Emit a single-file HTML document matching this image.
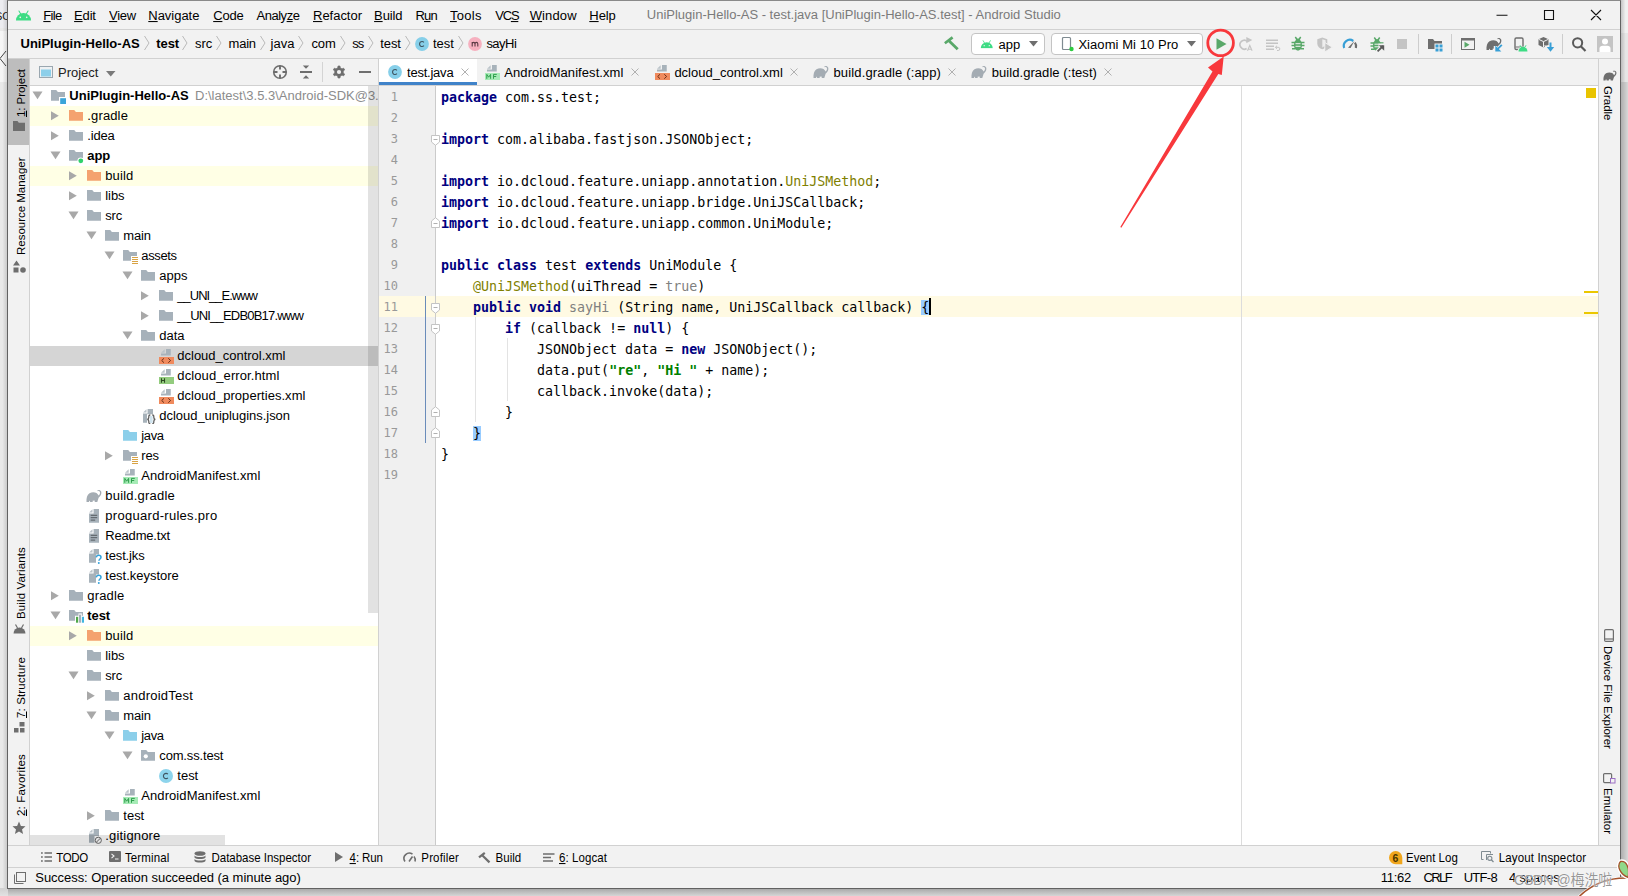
<!DOCTYPE html>
<html lang="en"><head><meta charset="utf-8"><title>UniPlugin-Hello-AS - test.java - Android Studio</title>
<style>
html,body{margin:0;padding:0}
body{width:1628px;height:896px;overflow:hidden;position:relative;background:#dadada;font-family:"Liberation Sans","Noto Sans CJK SC",sans-serif;font-size:13px;color:#000;line-height:1}
.a{position:absolute}
svg{overflow:visible}
.t{position:absolute;white-space:pre;line-height:16px;height:16px;transform:scaleY(1.04);transform-origin:0 12px}
.hl{position:absolute;height:1px;background:#d1d1d1}
.vl{position:absolute;width:1px;background:#d1d1d1}
u{text-decoration:underline;text-underline-offset:0.5px;text-decoration-thickness:1px}
.row{position:absolute;left:0;width:348px;height:20px}
.code{position:absolute;left:62px;font-family:"DejaVu Sans Mono","Liberation Mono",monospace;font-size:13.3px;white-space:pre;height:21px;line-height:21px;color:#000}
.ln{position:absolute;left:0;width:19px;text-align:right;font-family:"DejaVu Sans Mono","Liberation Mono",monospace;font-size:12px;height:21px;line-height:21px;color:#999}
.k{color:#000080;font-weight:bold}
.an{color:#808000}
.s{color:#008000;font-weight:bold}
.g{color:#808080}
.br{background:#99ccff}
.vt{position:absolute;white-space:pre;font-size:11.5px;line-height:14px;height:14px;transform-origin:0 0}
.bt{position:absolute;white-space:pre;font-size:11.5px;line-height:18px;top:849px;transform:scaleY(1.04);transform-origin:0 13px}
</style></head>
<body>
<svg width="0" height="0" style="position:absolute"><defs>
<symbol id="android" viewBox="0 0 18 12"><path d="M1 11.5a8 8.2 0 0 1 16 0z" fill="#3ddc84"/><path d="M4.2 1l1.7 3M13.8 1l-1.7 3" stroke="#3ddc84" stroke-width="1.1" stroke-linecap="round"/><circle cx="5.6" cy="8" r="0.9" fill="#f2f2f2"/><circle cx="12.4" cy="8" r="0.9" fill="#f2f2f2"/></symbol>
<symbol id="fold" viewBox="0 0 16 16"><path d="M1 2h5.200l1.700 1.900H15v8.900H1z" fill="currentColor"/></symbol>
<symbol id="file" viewBox="0 0 16 16"><path d="M7 1h6v14H3V5z" fill="#a6b1ba" opacity=".7"/><path d="M6 1v4H2z" fill="#a6b1ba"/></symbol>
<symbol id="fhalf" viewBox="0 0 16 16"><path d="M7 1h6v7H3V5z" fill="#a6b1ba" opacity=".7"/><path d="M6 1v4H2z" fill="#a6b1ba"/></symbol>
<symbol id="cls" viewBox="0 0 14 14"><circle cx="7" cy="7" r="6.900" fill="#86cfe9"/><path d="M8.900 8.700a2.500 2.500 0 1 1 0-3.400" fill="none" stroke="#3f5561" stroke-width="1.150"/></symbol>
<symbol id="mth" viewBox="0 0 14 14"><circle cx="7" cy="7" r="6.900" fill="#f6b0bf"/><path d="M4.200 9.400V5.100M4.200 6.600c.5-1.600 2.500-1.700 2.800.2V9.400M7 6.600c.5-1.600 2.600-1.700 2.800.2V9.400" fill="none" stroke="#5b3a44" stroke-width="1.100"/></symbol>
<symbol id="eleph" viewBox="0 0 16 16"><path d="M0.500 14C0.300 10 1 7 3.500 5.200C5.500 4 8.500 3.800 10.500 5C11.500 5.600 12.200 6.600 12.600 7.600C13.800 6.600 14.300 5.200 13.900 4C13.600 3.200 12.800 2.900 11.800 3.300L11.200 2.500C12.600 1.600 14.500 1.900 15.200 3.600C15.900 5.600 14.800 8 12.600 9.800C12.200 11.400 11.600 12.800 11.300 14H8.800L8.600 12.600C8 12.800 7.400 12.800 6.800 12.600L6.600 14H4.200L3.600 12.400C3.200 12.900 3 13.400 2.900 14Z" fill="currentColor"/></symbol>
<symbol id="xclose" viewBox="0 0 8 8"><path d="M0.5 0.5l7 7M7.500 0.500l-7 7" stroke="#b0b0b0" stroke-width="1" fill="none"/></symbol>
<symbol id="hammer" viewBox="0 0 16 16"><path d="M1 5.200L5.200 1l3.300 3.300-1.400 1.400 7.900 7.900-1.900 1.900-7.900-7.900-1.400 1.400z" fill="#59a869"/></symbol>
<symbol id="chev" viewBox="0 0 6 16"><path d="M0.500 1L5 8L0.500 15" fill="none" stroke="#b9b9b9" stroke-width="1"/></symbol>
<symbol id="aro" viewBox="0 0 11 11"><path d="M0.500 0.400h10L5.500 8.200z" fill="#a8a8a8"/></symbol>
<symbol id="arc" viewBox="0 0 11 12"><path d="M1 1.300v9L8.800 5.800z" fill="#a8a8a8"/></symbol>
<symbol id="gear" viewBox="0 0 14 14"><path d="M5.84 2.86L6.00 1.08L8.00 1.08L8.16 2.86L10.01 3.93L11.62 3.18L12.62 4.91L11.16 5.93L11.16 8.07L12.62 9.09L11.62 10.82L10.01 10.07L8.16 11.14L8.00 12.92L6.00 12.92L5.84 11.14L3.99 10.07L2.38 10.82L1.38 9.09L2.84 8.07L2.84 5.93L1.38 4.91L2.38 3.18L3.99 3.93z" fill="#6e6e6e" stroke="#6e6e6e" stroke-width="0.8" stroke-linejoin="round"/><circle cx="7" cy="7" r="2.100" fill="#f2f2f2"/></symbol>
<symbol id="projfold" viewBox="0 0 16 16"><path d="M1 2h5.200l1.700 1.900H15v8.900H1z" fill="#a6b1ba"/><rect x="9" y="9" width="7.800" height="7.800" fill="#fff"/><rect x="10.200" y="10.200" width="6.200" height="6.200" fill="#3aa5d9"/></symbol>
<symbol id="modfold" viewBox="0 0 16 16"><path d="M1 2h5.200l1.700 1.900H15v8.900H1z" fill="#a6b1ba"/><circle cx="12.800" cy="12.800" r="3.400" fill="#fff"/><circle cx="12.800" cy="12.800" r="2.400" fill="#2fd16b"/></symbol>
<symbol id="resfold" viewBox="0 0 16 16"><path d="M1 2h5.200l1.700 1.900H15v8.900H1z" fill="#a6b1ba"/><rect x="9" y="8" width="8" height="9" fill="#fff"/><path d="M10 9.500h6M10 11.500h6M10 13.500h6M10 15.500h6" stroke="#d9a343" stroke-width="1"/></symbol>
<symbol id="testmod" viewBox="0 0 16 16"><path d="M1 2h5.200l1.700 1.900H15v8.900H1z" fill="#a6b1ba"/><path d="M7 7.800h3.500V5.600h3.300v2.200H17V15.600H7z" fill="#fff"/><rect x="8" y="8.800" width="2.200" height="5.900" fill="#4fa84a"/><rect x="11" y="6.600" width="2.100" height="8.100" fill="#a6b1ba"/><rect x="13.900" y="8.800" width="2.100" height="5.900" fill="#40b6e0"/></symbol>
<symbol id="pkg" viewBox="0 0 16 16"><path d="M1 2h5.200l1.700 1.900H15v8.900H1z" fill="#a6b1ba"/><circle cx="5.800" cy="8.300" r="2.100" fill="#fff"/></symbol>
<symbol id="xml" viewBox="0 0 16 16"><path d="M8 1H12.750V7.500H3V5.600H8z" fill="#a7b2ba"/><path d="M3 4.700H6.700V1.300z" fill="#bac3c9"/><rect x="1" y="9" width="15" height="7" fill="#f08a5d"/><path d="M6 10.300L3.700 12.500L6 14.700M10.300 10.300L12.600 12.500L10.300 14.700" fill="none" stroke="#6b3018" stroke-width="1"/></symbol>
<symbol id="htm" viewBox="0 0 16 16"><path d="M8 1H12.750V7.500H3V5.600H8z" fill="#a7b2ba"/><path d="M3 4.700H6.700V1.300z" fill="#bac3c9"/><rect x="1" y="9" width="15" height="7" fill="#93cc7e"/><path d="M3.500 10.200v4.600M6.500 10.200v4.600M3.500 12.500h3" fill="none" stroke="#2c4a22" stroke-width="1.100"/></symbol>
<symbol id="mf" viewBox="0 0 16 16"><path d="M8 1H12.750V7.500H3V5.600H8z" fill="#a7b2ba"/><path d="M3 4.700H6.700V1.300z" fill="#bac3c9"/><rect x="1" y="9" width="15" height="7" fill="#a6ebb6"/><path d="M2.800 14.800V10.400l1.900 2.800 1.900-2.800v4.400M9.500 14.800V10.400h3.300M9.500 12.500h2.700" fill="none" stroke="#2f9e4c" stroke-width="1"/></symbol>
<symbol id="json" viewBox="0 0 16 16"><path d="M7.600 1H13V6.300H7V14.800H3V5.500H7.600z" fill="#a7b2ba"/><path d="M3 4.500H6.500V1.300z" fill="#bac3c9"/><path d="M10 8h2.600v7H10z" fill="#cfe3ee"/><path d="M10.300 7c-1.600 0-1.500 1-1.500 2.200 0 1.200-.3 1.900-1.500 2.100 1.200.2 1.500.9 1.500 2.100 0 1.200-.1 2.200 1.500 2.200M12.300 7c1.600 0 1.500 1 1.500 2.200 0 1.200.3 1.900 1.500 2.100-1.200.2-1.500.9-1.500 2.100 0 1.200.1 2.200-1.500 2.200" fill="none" stroke="#5e5e5e" stroke-width="1.300"/></symbol>
<symbol id="txt" viewBox="0 0 16 16"><path d="M7.600 1H13V14.800H3V5.500H7.600z" fill="#a7b2ba"/><path d="M3 4.500H6.500V1.300z" fill="#bac3c9"/><path d="M4.700 7.300h6.500M4.700 9.700h6.500M4.700 12.100h4.500" stroke="#555b60" stroke-width="1"/></symbol>
<symbol id="unk" viewBox="0 0 16 16"><path d="M7.600 1H13V6.500H10V14.800H3V5.500H7.600z" fill="#a7b2ba"/><path d="M3 4.500H6.500V1.300z" fill="#bac3c9"/><path d="M10.300 9.300c.2-1.400 1.300-2 2.400-2 1.300 0 2.300.8 2.300 2 0 1.700-2.100 1.700-2.100 3.500" fill="none" stroke="#35a3dc" stroke-width="1.500"/><circle cx="12.800" cy="15" r=".95" fill="#35a3dc"/></symbol>
<symbol id="gitig" viewBox="0 0 16 16"><path d="M7.600 1H13V8H8.500V14.800H3V5.500H7.600z" fill="#a7b2ba"/><path d="M3 4.500H6.500V1.300z" fill="#bac3c9"/><circle cx="12.300" cy="12.300" r="3.100" fill="none" stroke="#6e6e6e" stroke-width="1"/><path d="M10.200 14.400l4.200-4.200" stroke="#6e6e6e" stroke-width="1"/></symbol>
<symbol id="cls16" viewBox="0 0 16 16"><circle cx="8" cy="8" r="7" fill="#8dd4ec"/><path d="M9.900 9.800a2.600 2.600 0 1 1 0-3.600" fill="none" stroke="#3f5561" stroke-width="1.150"/></symbol>
<symbol id="bug" viewBox="0 0 16 16"><path d="M5.300 1L7 3.500M10.700 1L9 3.500M1.500 6.500h3.500M1.500 9.500h3.500M2 12.700h3.500M11 6.500h3.500M11 9.500h3.500M10.500 12.700h3.500" fill="none" stroke="#59a869" stroke-width="1.500"/><path d="M8 2.600c1.500 0 2.300 1 2.400 2 1 .7 1.600 2.400 1.600 4.400 0 3-1.600 5.500-4 5.500S4 12 4 9c0-2 .6-3.700 1.600-4.400.1-1 .9-2 2.400-2z" fill="#59a869"/><path d="M5.500 7.700h5M5.500 10.300h5" stroke="#f2f2f2" stroke-width="1"/></symbol>
</defs></svg>
<div class="a" style="left:0;top:0;width:8px;height:896px;background:#e9e9e9"></div>
<div class="a" style="left:0;top:0;width:8px;height:28px;background:#ececf0"></div>
<div class="a" style="left:0;top:31px;width:8px;height:51px;background:#f6f6f6"></div>
<div class="a" style="left:0;top:0;width:8px;height:896px;background:linear-gradient(to right,rgba(0,0,0,0) 30%,rgba(0,0,0,.16))"></div>
<div class="t" style="left:-5px;top:8px;font-size:11px;color:#222">SC</div>
<svg class="a" style="left:0;top:50px" width="7" height="18"><path d="M6 1L0 8.500L6 16" fill="none" stroke="#444" stroke-width="1"/></svg>
<div class="a" style="left:0;top:888px;width:1628px;height:8px;background:linear-gradient(to bottom,#a4a4a4,#d6d6d6)"></div>
<div class="a" style="left:0;top:888px;width:8px;height:8px;background:linear-gradient(to bottom,#d0d0d0,#e2e2e2)"></div>
<div class="a" style="left:1620px;top:0;width:8px;height:33px;background:#f0f0f0"></div>
<div class="a" style="left:1620px;top:33px;width:8px;height:49px;background:#e6e6e6"></div>
<div class="a" style="left:1620px;top:82px;width:8px;height:814px;background:linear-gradient(to right,#a8a8a8,#d8d8d8)"></div>
<div class="a" style="left:1620px;top:0;width:8px;height:82px;background:linear-gradient(to right,rgba(0,0,0,.22),rgba(0,0,0,0) 70%)"></div>
<div class="a" id="win" style="left:7px;top:0;width:1612px;height:887px;background:#f2f2f2;border:1px solid #626262;border-top-color:#8a8a8a"></div>
<div class="hl" style="left:8px;top:29px;width:1612px"></div>
<div class="hl" style="left:8px;top:58px;width:1612px"></div>
<div class="hl" style="left:30px;top:85px;width:1568px"></div>
<div class="vl" style="left:29px;top:59px;height:787px"></div>
<div class="vl" style="left:378px;top:59px;height:787px"></div>
<div class="vl" style="left:1598px;top:59px;height:787px"></div>
<div class="hl" style="left:8px;top:845px;width:1612px"></div>
<div class="hl" style="left:8px;top:867px;width:1612px"></div>
<svg class="a" style="left:14.500px;top:9.500px" width="17" height="11" viewBox="0 0 18 12" preserveAspectRatio="none"><use href="#android"/></svg>
<div class="t" style="left:43.3px;top:8px;letter-spacing:-0.642px;"><u>F</u>ile</div>
<div class="t" style="left:74.1px;top:8px;letter-spacing:-0.177px;"><u>E</u>dit</div>
<div class="t" style="left:109.1px;top:8px;letter-spacing:-0.313px;"><u>V</u>iew</div>
<div class="t" style="left:148.3px;top:8px;letter-spacing:-0.027px;"><u>N</u>avigate</div>
<div class="t" style="left:213.2px;top:8px;letter-spacing:-0.173px;"><u>C</u>ode</div>
<div class="t" style="left:256.5px;top:8px;letter-spacing:-0.481px;">Analy<u>z</u>e</div>
<div class="t" style="left:313px;top:8px;letter-spacing:-0.018px;"><u>R</u>efactor</div>
<div class="t" style="left:374.1px;top:8px;letter-spacing:-0.144px;"><u>B</u>uild</div>
<div class="t" style="left:415.5px;top:8px;letter-spacing:-0.853px;">R<u>u</u>n</div>
<div class="t" style="left:450px;top:8px;letter-spacing:0.268px;"><u>T</u>ools</div>
<div class="t" style="left:495.3px;top:8px;letter-spacing:-1.245px;">VC<u>S</u></div>
<div class="t" style="left:529.7px;top:8px;letter-spacing:0.125px;"><u>W</u>indow</div>
<div class="t" style="left:589.3px;top:8px;letter-spacing:-0.062px;"><u>H</u>elp</div>
<div class="t" style="left:646.800px;top:7px;color:#7a7a7a;letter-spacing:-0.000px;">UniPlugin-Hello-AS - test.java [UniPlugin-Hello-AS.test] - Android Studio</div>
<svg class="a" style="left:1490px;top:5px" width="120" height="20" viewBox="0 0 120 20"><path d="M6.500 10.300h11M54.500 5.500h9v9h-9zM101 5l10 10M111 5l-10 10" fill="none" stroke="#111" stroke-width="1.100"/></svg>
<div class="t" style="left:20.5px;top:36px;font-weight:bold;letter-spacing:0.002px;">UniPlugin-Hello-AS</div>
<div class="t" style="left:156.3px;top:36px;font-weight:bold;letter-spacing:-0.106px;">test</div>
<div class="t" style="left:195px;top:36px;letter-spacing:-0.048px;">src</div>
<div class="t" style="left:228.6px;top:36px;letter-spacing:-0.247px;">main</div>
<div class="t" style="left:270.6px;top:36px;letter-spacing:0.010px;">java</div>
<div class="t" style="left:311.4px;top:36px;letter-spacing:-0.087px;">com</div>
<div class="t" style="left:352.2px;top:36px;letter-spacing:-0.950px;">ss</div>
<div class="t" style="left:380.2px;top:36px;letter-spacing:-0.067px;">test</div>
<div class="t" style="left:433px;top:36px;letter-spacing:0.008px;">test</div>
<div class="t" style="left:486.4px;top:36px;letter-spacing:-0.523px;">sayHi</div>
<svg class="a" style="left:144px;top:35px" width="6" height="16"><use href="#chev"/></svg><svg class="a" style="left:182.4px;top:35px" width="6" height="16"><use href="#chev"/></svg><svg class="a" style="left:215.8px;top:35px" width="6" height="16"><use href="#chev"/></svg><svg class="a" style="left:259.7px;top:35px" width="6" height="16"><use href="#chev"/></svg><svg class="a" style="left:298.4px;top:35px" width="6" height="16"><use href="#chev"/></svg><svg class="a" style="left:339.6px;top:35px" width="6" height="16"><use href="#chev"/></svg><svg class="a" style="left:367.5px;top:35px" width="6" height="16"><use href="#chev"/></svg><svg class="a" style="left:404.6px;top:35px" width="6" height="16"><use href="#chev"/></svg><svg class="a" style="left:457.6px;top:35px" width="6" height="16"><use href="#chev"/></svg>
<svg class="a" style="left:415px;top:36.7px" width="14" height="14"><use href="#cls"/></svg><svg class="a" style="left:468px;top:36.7px" width="14" height="14"><use href="#mth"/></svg>
<svg class="a" style="left:940px;top:30px" width="24" height="24"><path d="M4.850 13.270L12.600 7.370" stroke="#59a869" stroke-width="2.700" fill="none"/><path d="M8.900 10.700L17.700 19.300" stroke="#59a869" stroke-width="2.800" fill="none"/></svg>
<div class="a" style="left:971px;top:33px;width:71.500px;height:19.600px;background:#fff;border:1px solid #c4c4c4;border-radius:4px"></div>
<svg class="a" style="left:979.500px;top:39.700px" width="13.500" height="8.600" viewBox="0 0 18 12" preserveAspectRatio="none"><use href="#android"/></svg>
<div class="t" style="left:998.500px;top:37px;letter-spacing:0.066px;">app</div>
<svg class="a" style="left:1029px;top:41px" width="9" height="6"><path d="M0 0h9L4.500 5.500z" fill="#6e6e6e"/></svg>
<div class="a" style="left:1051px;top:33px;width:149.500px;height:19.600px;background:#fff;border:1px solid #c4c4c4;border-radius:4px"></div>
<svg class="a" style="left:1061px;top:37px" width="14" height="15"><rect x="1.500" y="0.500" width="8" height="12" rx="1" fill="#fff" stroke="#7f8b91" stroke-width="1.200"/><circle cx="10.500" cy="12" r="2.200" fill="#2ecc40"/></svg>
<div class="t" style="left:1078.400px;top:37px;letter-spacing:0.063px;">Xiaomi Mi 10 Pro</div>
<svg class="a" style="left:1187px;top:41px" width="9" height="6"><path d="M0 0h9L4.500 5.500z" fill="#6e6e6e"/></svg>
<svg class="a" style="left:1216px;top:38px" width="11" height="12"><path d="M0.500 0.300L10.500 6L0.500 11.700z" fill="#59a869"/></svg>
<svg class="a" style="left:1238px;top:36px" width="16" height="16"><path d="M9.300 5.400A4.400 4.400 0 1 0 8.600 12.500" fill="none" stroke="#c4c4c4" stroke-width="1.700"/><path d="M8.300 1L14.300 4L8.300 7.300z" fill="#c4c4c4"/><path d="M9.500 14.800L11.800 9.500L14.100 14.800M10.300 13.200h3" fill="none" stroke="#c4c4c4" stroke-width="1.100"/></svg>
<svg class="a" style="left:1265px;top:36px" width="16" height="16"><path d="M1 4.200h12M1 7.200h12M1 10.200h8M1 13.200h8" stroke="#c4c4c4" stroke-width="1.600"/><path d="M10.800 11.300h2.400a1.600 1.600 0 0 1 0 3.200h-1.200M12 9.800l-1.700 1.500 1.700 1.500" fill="none" stroke="#c4c4c4" stroke-width="1"/></svg>
<svg class="a" style="left:1290px;top:36px" width="16" height="16"><use href="#bug"/></svg>
<svg class="a" style="left:1316px;top:36px" width="17" height="17"><path d="M1.300 3.200L6.300 1.500L11.300 3.200V7.500C11.300 10.500 9 12.300 6.300 13.300C3.600 12.300 1.300 10.500 1.300 7.500Z" fill="#c4c4c4"/><path d="M6.300 3.300V11.500C8 10.700 9.600 9.400 9.600 7.300V4.300z" fill="#eee"/><path d="M8.800 6.500L16.300 11.200L8.800 16z" fill="#c4c4c4" stroke="#f2f2f2" stroke-width="1"/></svg>
<svg class="a" style="left:1342px;top:36px" width="16" height="16"><path d="M2.200 12A6 6 0 0 1 11.300 5" fill="none" stroke="#389fd6" stroke-width="2.200"/><path d="M12.900 6.600A6 6 0 0 1 13.900 12" fill="none" stroke="#6e6e6e" stroke-width="2.200"/><path d="M6 11.800L12.600 4.800L8.600 12z" fill="#6e6e6e"/></svg>
<svg class="a" style="left:1369px;top:36px" width="16" height="17"><use href="#bug"/><path d="M7.500 16.500L13 11M9.500 9.500H15.500V15.500" fill="none" stroke="#f2f2f2" stroke-width="4"/><path d="M8.600 15.400L14 10" fill="none" stroke="#5a5a5a" stroke-width="1.800"/><path d="M9.800 9.300H15.200V14.700z" fill="#5a5a5a"/></svg>
<svg class="a" style="left:1397px;top:39px" width="10" height="10"><rect width="10" height="10" fill="#c4c4c4"/></svg>
<div class="vl" style="left:1418px;top:34px;height:20px;background:#cdcdcd"></div>
<svg class="a" style="left:1427px;top:36px" width="16" height="16"><path d="M1 3h5l1.500 2H15v8H1z" fill="#6e6e6e"/><rect x="7.500" y="7.500" width="9" height="9" fill="#f2f2f2"/><path d="M8.500 8.500h3v3h-3zM12.500 8.500h3v3h-3zM8.500 12.500h3v3h-3zM12.500 12.500h3v3h-3z" fill="#389fd6"/></svg>
<div class="vl" style="left:1451px;top:34px;height:20px;background:#cdcdcd"></div>
<svg class="a" style="left:1460px;top:36px" width="16" height="16"><path d="M1 2h14v12H1z" fill="#6e6e6e"/><path d="M2 4.500h12v8.500H2z" fill="#f2f2f2"/><path d="M4.500 5.800L9.500 8.800L4.500 11.800z" fill="#59a869"/></svg>
<svg class="a" style="left:1486px;top:36px;color:#6e6e6e" width="16" height="16"><use href="#eleph"/><path d="M8 8h9v9H8z" fill="#f2f2f2" opacity="0"/><path d="M15.500 9.200L10.800 13.900M9.500 10v5.500H15" fill="none" stroke="#f2f2f2" stroke-width="3.500"/><path d="M15.800 8.800L11 13.600" fill="none" stroke="#389fd6" stroke-width="1.900"/><path d="M9.300 9.500V15.500H15.300z" fill="#389fd6"/></svg>
<svg class="a" style="left:1513px;top:36px" width="16" height="16"><rect x="2" y="2" width="8" height="11.500" rx="1.200" fill="#f2f2f2" stroke="#6e6e6e" stroke-width="1.400"/><path d="M2.500 11h7" stroke="#6e6e6e" stroke-width="1"/><path d="M5 16.500a5 5 0 0 1 10 0" fill="#f2f2f2" stroke="#f2f2f2" stroke-width="2"/><path d="M5.500 15.500a4.500 4.700 0 0 1 9 0z" fill="#3ddc84"/><path d="M7 9.300l1.200 2M13 9.300l-1.200 2" stroke="#3ddc84" stroke-width="1"/></svg>
<svg class="a" style="left:1538px;top:36px" width="17" height="17"><path d="M5.500 1L10.500 3.200V9L5.500 11.500L0.500 9V3.200z" fill="#6e6e6e"/><path d="M0.800 3.400L5.500 5.600L10.200 3.400M5.500 5.600V11.300" fill="none" stroke="#f2f2f2" stroke-width="1"/><path d="M12.500 5v9M8 10.500h9l-4.500 6z" stroke="#f2f2f2" stroke-width="2" fill="#f2f2f2"/><path d="M12.500 6.500v6" stroke="#389fd6" stroke-width="2"/><path d="M8.800 11h7.400l-3.700 4.800z" fill="#389fd6"/></svg>
<div class="vl" style="left:1562px;top:34px;height:20px;background:#cdcdcd"></div>
<svg class="a" style="left:1571px;top:36px" width="16" height="16"><circle cx="6.600" cy="6.800" r="4.600" fill="none" stroke="#5a5a5a" stroke-width="2"/><path d="M9.800 10.200L14.500 15" stroke="#5a5a5a" stroke-width="2.200"/></svg>
<svg class="a" style="left:1597px;top:36px" width="16" height="16"><rect width="16" height="16" fill="#c4c4c4"/><circle cx="8" cy="5.600" r="3" fill="#fff"/><path d="M2.500 16v-3.500c0-2 1.500-2.800 3-2.800h5c1.500 0 3 .8 3 2.800V16z" fill="#fff"/></svg>
<svg class="a" style="left:39px;top:66px" width="15" height="13"><rect x="0.500" y="0.500" width="13" height="11" fill="#eef1f3" stroke="#9aa7b0"/><rect x="2" y="3.500" width="10" height="7" fill="#8ccfea"/></svg>
<div class="t" style="left:58px;top:65px;color:#222">Project</div>
<svg class="a" style="left:106px;top:71px" width="10" height="6"><path d="M0 0h9.500L4.750 5.500z" fill="#7a7a7a"/></svg>
<svg class="a" style="left:272px;top:64px" width="16" height="16"><circle cx="8" cy="8" r="6.300" fill="none" stroke="#6e6e6e" stroke-width="1.600"/><path d="M8 1.500v4M8 10.500v4M1.500 8h4M10.500 8h4" stroke="#6e6e6e" stroke-width="1.900"/></svg>
<svg class="a" style="left:299px;top:64px" width="14" height="16"><path d="M1 8h12" stroke="#6e6e6e" stroke-width="2"/><path d="M3.800 1.600h6.400L7 4.800zM3.800 14.400h6.400L7 11.200z" fill="#6e6e6e"/></svg>
<div class="vl" style="left:322px;top:62px;height:20px;background:#d4d4d4"></div>
<svg class="a" style="left:332px;top:65px" width="14" height="14"><use href="#gear"/></svg>
<svg class="a" style="left:359px;top:71px" width="12" height="2"><rect width="12" height="2" fill="#6e6e6e"/></svg>
<div class="a" id="tree" style="left:30px;top:86px;width:348px;height:759px;background:#fff;overflow:hidden">
<div class="row" style="top:0px;"><svg class="a" style="left:2px;top:5px" width="11" height="11"><use href="#aro"/></svg><svg class="a" style="left:20px;top:2px" width="16" height="16"><use href="#projfold"/></svg><span class="t" style="left:39.3px;top:2px;font-weight:bold;letter-spacing:0.015px;">UniPlugin-Hello-AS</span><span class="t" style="left:165px;top:2px;color:#8c8c8c;font-size:13px">D:\latest\3.5.3\Android-SDK@3.</span></div>
<div class="row" style="top:20px;background:#ffffe5;"><svg class="a" style="left:20px;top:4px" width="11" height="12"><use href="#arc"/></svg><svg class="a" style="left:38px;top:2px;color:#f4a26f" width="16" height="16"><use href="#fold"/></svg><span class="t" style="left:57.3px;top:2px;letter-spacing:0.136px;">.gradle</span></div>
<div class="row" style="top:40px;"><svg class="a" style="left:20px;top:4px" width="11" height="12"><use href="#arc"/></svg><svg class="a" style="left:38px;top:2px;color:#a6b1ba" width="16" height="16"><use href="#fold"/></svg><span class="t" style="left:57.3px;top:2px;letter-spacing:-0.201px;">.idea</span></div>
<div class="row" style="top:60px;"><svg class="a" style="left:20px;top:5px" width="11" height="11"><use href="#aro"/></svg><svg class="a" style="left:38px;top:2px" width="16" height="16"><use href="#modfold"/></svg><span class="t" style="left:57.3px;top:2px;font-weight:bold;letter-spacing:-0.142px;">app</span></div>
<div class="row" style="top:80px;background:#ffffe5;"><svg class="a" style="left:38px;top:4px" width="11" height="12"><use href="#arc"/></svg><svg class="a" style="left:56px;top:2px;color:#f4a26f" width="16" height="16"><use href="#fold"/></svg><span class="t" style="left:75.3px;top:2px;letter-spacing:0.096px;">build</span></div>
<div class="row" style="top:100px;"><svg class="a" style="left:38px;top:4px" width="11" height="12"><use href="#arc"/></svg><svg class="a" style="left:56px;top:2px;color:#a6b1ba" width="16" height="16"><use href="#fold"/></svg><span class="t" style="left:75.3px;top:2px;letter-spacing:-0.079px;">libs</span></div>
<div class="row" style="top:120px;"><svg class="a" style="left:38px;top:5px" width="11" height="11"><use href="#aro"/></svg><svg class="a" style="left:56px;top:2px;color:#a6b1ba" width="16" height="16"><use href="#fold"/></svg><span class="t" style="left:75.3px;top:2px;letter-spacing:-0.215px;">src</span></div>
<div class="row" style="top:140px;"><svg class="a" style="left:56px;top:5px" width="11" height="11"><use href="#aro"/></svg><svg class="a" style="left:74px;top:2px;color:#a6b1ba" width="16" height="16"><use href="#fold"/></svg><span class="t" style="left:93.3px;top:2px;letter-spacing:-0.184px;">main</span></div>
<div class="row" style="top:160px;"><svg class="a" style="left:74px;top:5px" width="11" height="11"><use href="#aro"/></svg><svg class="a" style="left:92px;top:2px" width="16" height="16"><use href="#resfold"/></svg><span class="t" style="left:111.3px;top:2px;letter-spacing:-0.355px;">assets</span></div>
<div class="row" style="top:180px;"><svg class="a" style="left:92px;top:5px" width="11" height="11"><use href="#aro"/></svg><svg class="a" style="left:110px;top:2px;color:#a6b1ba" width="16" height="16"><use href="#fold"/></svg><span class="t" style="left:129.3px;top:2px;letter-spacing:-0.001px;">apps</span></div>
<div class="row" style="top:200px;"><svg class="a" style="left:110px;top:4px" width="11" height="12"><use href="#arc"/></svg><svg class="a" style="left:128px;top:2px;color:#a6b1ba" width="16" height="16"><use href="#fold"/></svg><span class="t" style="left:147.3px;top:2px;letter-spacing:-1.005px;">__UNI__E.www</span></div>
<div class="row" style="top:220px;"><svg class="a" style="left:110px;top:4px" width="11" height="12"><use href="#arc"/></svg><svg class="a" style="left:128px;top:2px;color:#a6b1ba" width="16" height="16"><use href="#fold"/></svg><span class="t" style="left:147.3px;top:2px;letter-spacing:-0.805px;">__UNI__EDB0B17.www</span></div>
<div class="row" style="top:240px;"><svg class="a" style="left:92px;top:5px" width="11" height="11"><use href="#aro"/></svg><svg class="a" style="left:110px;top:2px;color:#a6b1ba" width="16" height="16"><use href="#fold"/></svg><span class="t" style="left:129.3px;top:2px;letter-spacing:-0.028px;">data</span></div>
<div class="row" style="top:260px;background:#d5d5d5;"><svg class="a" style="left:128px;top:2px" width="16" height="16"><use href="#xml"/></svg><span class="t" style="left:147.3px;top:2px;letter-spacing:-0.011px;">dcloud_control.xml</span></div>
<div class="row" style="top:280px;"><svg class="a" style="left:128px;top:2px" width="16" height="16"><use href="#htm"/></svg><span class="t" style="left:147.3px;top:2px;letter-spacing:0.103px;">dcloud_error.html</span></div>
<div class="row" style="top:300px;"><svg class="a" style="left:128px;top:2px" width="16" height="16"><use href="#xml"/></svg><span class="t" style="left:147.3px;top:2px;letter-spacing:0.048px;">dcloud_properties.xml</span></div>
<div class="row" style="top:320px;"><svg class="a" style="left:110px;top:2px" width="16" height="16"><use href="#json"/></svg><span class="t" style="left:129.3px;top:2px;letter-spacing:-0.038px;">dcloud_uniplugins.json</span></div>
<div class="row" style="top:340px;"><svg class="a" style="left:92px;top:2px;color:#8ccfea" width="16" height="16"><use href="#fold"/></svg><span class="t" style="left:111.3px;top:2px;letter-spacing:-0.352px;">java</span></div>
<div class="row" style="top:360px;"><svg class="a" style="left:74px;top:4px" width="11" height="12"><use href="#arc"/></svg><svg class="a" style="left:92px;top:2px" width="16" height="16"><use href="#resfold"/></svg><span class="t" style="left:111.3px;top:2px;letter-spacing:-0.204px;">res</span></div>
<div class="row" style="top:380px;"><svg class="a" style="left:92px;top:2px" width="16" height="16"><use href="#mf"/></svg><span class="t" style="left:111.3px;top:2px;letter-spacing:0.075px;">AndroidManifest.xml</span></div>
<div class="row" style="top:400px;"><svg class="a" style="left:56px;top:2px;color:#a4acb3" width="16" height="16"><use href="#eleph"/></svg><span class="t" style="left:75.3px;top:2px;letter-spacing:0.207px;">build.gradle</span></div>
<div class="row" style="top:420px;"><svg class="a" style="left:56px;top:2px" width="16" height="16"><use href="#txt"/></svg><span class="t" style="left:75.3px;top:2px;letter-spacing:0.291px;">proguard-rules.pro</span></div>
<div class="row" style="top:440px;"><svg class="a" style="left:56px;top:2px" width="16" height="16"><use href="#txt"/></svg><span class="t" style="left:75.3px;top:2px;letter-spacing:-0.178px;">Readme.txt</span></div>
<div class="row" style="top:460px;"><svg class="a" style="left:56px;top:2px" width="16" height="16"><use href="#unk"/></svg><span class="t" style="left:75.3px;top:2px;letter-spacing:-0.159px;">test.jks</span></div>
<div class="row" style="top:480px;"><svg class="a" style="left:56px;top:2px" width="16" height="16"><use href="#unk"/></svg><span class="t" style="left:75.3px;top:2px;letter-spacing:-0.019px;">test.keystore</span></div>
<div class="row" style="top:500px;"><svg class="a" style="left:20px;top:4px" width="11" height="12"><use href="#arc"/></svg><svg class="a" style="left:38px;top:2px;color:#a6b1ba" width="16" height="16"><use href="#fold"/></svg><span class="t" style="left:57.3px;top:2px;letter-spacing:0.177px;">gradle</span></div>
<div class="row" style="top:520px;"><svg class="a" style="left:20px;top:5px" width="11" height="11"><use href="#aro"/></svg><svg class="a" style="left:38px;top:2px" width="16" height="16"><use href="#testmod"/></svg><span class="t" style="left:57.3px;top:2px;font-weight:bold;letter-spacing:-0.106px;">test</span></div>
<div class="row" style="top:540px;background:#ffffe5;"><svg class="a" style="left:38px;top:4px" width="11" height="12"><use href="#arc"/></svg><svg class="a" style="left:56px;top:2px;color:#f4a26f" width="16" height="16"><use href="#fold"/></svg><span class="t" style="left:75.3px;top:2px;letter-spacing:0.096px;">build</span></div>
<div class="row" style="top:560px;"><svg class="a" style="left:56px;top:2px;color:#a6b1ba" width="16" height="16"><use href="#fold"/></svg><span class="t" style="left:75.3px;top:2px;letter-spacing:-0.079px;">libs</span></div>
<div class="row" style="top:580px;"><svg class="a" style="left:38px;top:5px" width="11" height="11"><use href="#aro"/></svg><svg class="a" style="left:56px;top:2px;color:#a6b1ba" width="16" height="16"><use href="#fold"/></svg><span class="t" style="left:75.3px;top:2px;letter-spacing:-0.215px;">src</span></div>
<div class="row" style="top:600px;"><svg class="a" style="left:56px;top:4px" width="11" height="12"><use href="#arc"/></svg><svg class="a" style="left:74px;top:2px;color:#a6b1ba" width="16" height="16"><use href="#fold"/></svg><span class="t" style="left:93.3px;top:2px;letter-spacing:0.226px;">androidTest</span></div>
<div class="row" style="top:620px;"><svg class="a" style="left:56px;top:5px" width="11" height="11"><use href="#aro"/></svg><svg class="a" style="left:74px;top:2px;color:#a6b1ba" width="16" height="16"><use href="#fold"/></svg><span class="t" style="left:93.3px;top:2px;letter-spacing:-0.184px;">main</span></div>
<div class="row" style="top:640px;"><svg class="a" style="left:74px;top:5px" width="11" height="11"><use href="#aro"/></svg><svg class="a" style="left:92px;top:2px;color:#8ccfea" width="16" height="16"><use href="#fold"/></svg><span class="t" style="left:111.3px;top:2px;letter-spacing:-0.352px;">java</span></div>
<div class="row" style="top:660px;"><svg class="a" style="left:92px;top:5px" width="11" height="11"><use href="#aro"/></svg><svg class="a" style="left:110px;top:2px" width="16" height="16"><use href="#pkg"/></svg><span class="t" style="left:129.3px;top:2px;letter-spacing:-0.164px;">com.ss.test</span></div>
<div class="row" style="top:680px;"><svg class="a" style="left:128px;top:2px" width="16" height="16"><use href="#cls16"/></svg><span class="t" style="left:147.3px;top:2px;letter-spacing:-0.005px;">test</span></div>
<div class="row" style="top:700px;"><svg class="a" style="left:92px;top:2px" width="16" height="16"><use href="#mf"/></svg><span class="t" style="left:111.3px;top:2px;letter-spacing:0.075px;">AndroidManifest.xml</span></div>
<div class="row" style="top:720px;"><svg class="a" style="left:56px;top:4px" width="11" height="12"><use href="#arc"/></svg><svg class="a" style="left:74px;top:2px;color:#a6b1ba" width="16" height="16"><use href="#fold"/></svg><span class="t" style="left:93.3px;top:2px;letter-spacing:-0.005px;">test</span></div>
<div class="row" style="top:740px;"><svg class="a" style="left:56px;top:2px" width="16" height="16"><use href="#gitig"/></svg><span class="t" style="left:75.3px;top:2px;letter-spacing:0.172px;">.gitignore</span></div>
<div class="a" style="left:338px;top:0;width:10px;height:527px;background:rgba(0,0,0,.115)"></div>
<div class="a" style="left:0;top:749px;width:195px;height:10px;background:rgba(0,0,0,.115)"></div>
</div>
<div class="a" style="left:379px;top:59px;width:98px;height:26px;background:#fff"></div>
<div class="a" style="left:379px;top:82px;width:98px;height:3px;background:#4083c9"></div>
<svg class="a" style="left:388px;top:65px" width="14" height="14"><use href="#cls"/></svg>
<div class="t" style="left:407px;top:65px;letter-spacing:-0.225px;">test.java</div>
<svg class="a" style="left:461px;top:68px" width="8" height="8"><use href="#xclose"/></svg>
<svg class="a" style="left:484px;top:64px" width="16" height="16"><use href="#mf"/></svg>
<div class="t" style="left:504.3px;top:65px;letter-spacing:0.075px;">AndroidManifest.xml</div>
<svg class="a" style="left:631px;top:68px" width="8" height="8"><use href="#xclose"/></svg>
<svg class="a" style="left:654px;top:64px" width="16" height="16"><use href="#xml"/></svg>
<div class="t" style="left:674.4px;top:65px;letter-spacing:0.001px;">dcloud_control.xml</div>
<svg class="a" style="left:790px;top:68px" width="8" height="8"><use href="#xclose"/></svg>
<svg class="a" style="left:813px;top:64px;color:#a4acb3" width="16" height="16"><use href="#eleph"/></svg>
<div class="t" style="left:833.5px;top:65px;letter-spacing:0.142px;">build.gradle (:app)</div>
<svg class="a" style="left:948px;top:68px" width="8" height="8"><use href="#xclose"/></svg>
<svg class="a" style="left:971px;top:64px;color:#a4acb3" width="16" height="16"><use href="#eleph"/></svg>
<div class="t" style="left:991.7px;top:65px;letter-spacing:0.062px;">build.gradle (:test)</div>
<svg class="a" style="left:1104px;top:68px" width="8" height="8"><use href="#xclose"/></svg>
<div class="a" id="editor" style="left:379px;top:86px;width:1219px;height:759px;background:#fff;overflow:hidden">
<div class="a" style="left:0;top:0;width:56px;height:759px;background:#f0f0f0"></div>
<div class="a" style="left:0;top:210px;width:1219px;height:21px;background:#fffae3"></div>
<div class="vl" style="left:56px;top:0;height:759px;background:#cbcbcb"></div>
<div class="vl" style="left:862px;top:0;height:759px;background:#dcdcdc"></div>
<div class="ln" style="top:1px">1</div><div class="code" style="top:1px"><span class="k">package</span> com.ss.test;</div>
<div class="ln" style="top:22px">2</div><div class="code" style="top:22px"></div>
<div class="ln" style="top:43px">3</div><div class="code" style="top:43px"><span class="k">import</span> com.alibaba.fastjson.JSONObject;</div>
<div class="ln" style="top:64px">4</div><div class="code" style="top:64px"></div>
<div class="ln" style="top:85px">5</div><div class="code" style="top:85px"><span class="k">import</span> io.dcloud.feature.uniapp.annotation.<span class="an">UniJSMethod</span>;</div>
<div class="ln" style="top:106px">6</div><div class="code" style="top:106px"><span class="k">import</span> io.dcloud.feature.uniapp.bridge.UniJSCallback;</div>
<div class="ln" style="top:127px">7</div><div class="code" style="top:127px"><span class="k">import</span> io.dcloud.feature.uniapp.common.UniModule;</div>
<div class="ln" style="top:148px">8</div><div class="code" style="top:148px"></div>
<div class="ln" style="top:169px">9</div><div class="code" style="top:169px"><span class="k">public class</span> test <span class="k">extends</span> UniModule {</div>
<div class="ln" style="top:190px">10</div><div class="code" style="top:190px">    <span class="an">@UniJSMethod</span>(uiThread = <span class="g">true</span>)</div>
<div class="ln" style="top:211px">11</div><div class="code" style="top:211px">    <span class="k">public void</span> <span class="g">sayHi</span> (String name, UniJSCallback callback) <span class="br">{</span></div>
<div class="ln" style="top:232px">12</div><div class="code" style="top:232px">        <span class="k">if</span> (callback != <span class="k">null</span>) {</div>
<div class="ln" style="top:253px">13</div><div class="code" style="top:253px">            JSONObject data = <span class="k">new</span> JSONObject();</div>
<div class="ln" style="top:274px">14</div><div class="code" style="top:274px">            data.put(<span class="s">"re"</span>, <span class="s">"Hi "</span> + name);</div>
<div class="ln" style="top:295px">15</div><div class="code" style="top:295px">            callback.invoke(data);</div>
<div class="ln" style="top:316px">16</div><div class="code" style="top:316px">        }</div>
<div class="ln" style="top:337px">17</div><div class="code" style="top:337px">    <span class="br">}</span></div>
<div class="ln" style="top:358px">18</div><div class="code" style="top:358px">}</div>
<div class="ln" style="top:379px">19</div><div class="code" style="top:379px"></div>
<div class="a" style="left:46px;top:210px;width:1px;height:147px;background:#6a8cba"></div>
<div class="a" style="left:96px;top:231px;width:1px;height:105px;background:#e3e3e3"></div>
<div class="a" style="left:128px;top:252px;width:1px;height:63px;background:#e3e3e3"></div>
<svg class="a" style="left:52px;top:48.5px" width="9" height="11"><path d="M0.500 0.500h8v6.500L4.500 10.300L0.500 7z" fill="#fff" stroke="#c4c4c4"/><path d="M2.500 4.500h4" stroke="#b0b0b0"/></svg>
<svg class="a" style="left:52px;top:130.5px" width="9" height="11"><path d="M0.500 10.500h8V4L4.500 0.700L0.500 4z" fill="#fff" stroke="#c4c4c4"/><path d="M2.500 6.500h4" stroke="#b0b0b0"/></svg>
<svg class="a" style="left:52px;top:216.5px" width="9" height="11"><path d="M0.500 0.500h8v6.500L4.500 10.300L0.500 7z" fill="#fff" stroke="#c4c4c4"/><path d="M2.500 4.500h4" stroke="#b0b0b0"/></svg>
<svg class="a" style="left:52px;top:237.5px" width="9" height="11"><path d="M0.500 0.500h8v6.500L4.500 10.300L0.500 7z" fill="#fff" stroke="#c4c4c4"/><path d="M2.500 4.500h4" stroke="#b0b0b0"/></svg>
<svg class="a" style="left:52px;top:319.5px" width="9" height="11"><path d="M0.500 10.500h8V4L4.500 0.700L0.500 4z" fill="#fff" stroke="#c4c4c4"/><path d="M2.500 6.500h4" stroke="#b0b0b0"/></svg>
<svg class="a" style="left:52px;top:340.5px" width="9" height="11"><path d="M0.500 10.500h8V4L4.500 0.700L0.500 4z" fill="#fff" stroke="#c4c4c4"/><path d="M2.500 6.500h4" stroke="#b0b0b0"/></svg>
<div class="a" style="left:550px;top:212px;width:2px;height:17px;background:#000"></div>
<div class="a" style="left:1207px;top:2px;width:10px;height:10px;background:#e9c400"></div>
<div class="a" style="left:1205px;top:205px;width:14px;height:2px;background:#ebc700"></div>
<div class="a" style="left:1205px;top:226px;width:14px;height:2px;background:#ebc700"></div>
</div>
<div class="a" style="left:8px;top:59px;width:21px;height:86px;background:#bdbdbd"></div>
<div class="vt" style="left:14px;top:116.5px;transform:rotate(-90deg);letter-spacing:-0.059px;"><u>1</u>: Project</div>
<svg class="a" style="left:13px;top:120px" width="12" height="12"><path d="M0 1h4.500l1.300 1.800H12V11H0z" fill="#6e6e6e"/></svg>
<div class="vt" style="left:14px;top:254.5px;transform:rotate(-90deg);letter-spacing:-0.020px;">Resource Manager</div>
<svg class="a" style="left:13px;top:260px" width="13" height="13"><path d="M3.500 0.500L7 5.500H0zM0.500 7.500h5v5h-5z" fill="#6e6e6e"/><circle cx="10" cy="10" r="2.800" fill="#6e6e6e"/></svg>
<div class="vt" style="left:14px;top:618.6px;transform:rotate(-90deg);letter-spacing:0.135px;">Build Variants</div>
<svg class="a" style="left:13px;top:624px" width="13" height="10"><path d="M0.500 9.500a6 6 0 0 1 12 0z" fill="#6e6e6e"/><path d="M2.500 0.500l2 3.500M10.500 0.500l-2 3.500" stroke="#6e6e6e" stroke-width="1.200"/></svg>
<div class="vt" style="left:14px;top:718px;transform:rotate(-90deg);letter-spacing:0.128px;"><u>7</u>: Structure</div>
<svg class="a" style="left:14px;top:722px" width="11" height="11"><path d="M5.500 0h5v4.500h-5zM0 6h4.500v4.500H0zM6 6h4.500v4.500H6z" fill="#6e6e6e"/></svg>
<div class="vt" style="left:14px;top:816px;transform:rotate(-90deg);letter-spacing:0.159px;"><u>2</u>: Favorites</div>
<svg class="a" style="left:12px;top:821px" width="14" height="14"><path d="M7 0.500l1.900 4.400 4.600.4-3.500 3.100 1.100 4.700L7 10.600 2.900 13.100 4 8.400 0.500 5.300l4.600-.4z" fill="#6e6e6e"/></svg>
<svg class="a" style="left:1602.600px;top:68.800px;color:#6e6e6e" width="14" height="13" viewBox="0 0 16 16" preserveAspectRatio="none"><use href="#eleph"/></svg>
<div class="vt" style="left:1615px;top:86px;transform:rotate(90deg)">Gradle</div>
<svg class="a" style="left:1604px;top:629px" width="10" height="13"><rect x="0.600" y="0.600" width="8.800" height="11.800" rx="1.200" fill="none" stroke="#6e6e6e" stroke-width="1.200"/><path d="M1 10h8" stroke="#6e6e6e" stroke-width="1.200"/></svg>
<div class="vt" style="left:1615px;top:646px;transform:rotate(90deg)">Device File Explorer</div>
<svg class="a" style="left:1603px;top:772px" width="13" height="12"><rect x="0.600" y="1.600" width="8" height="9" rx="1" fill="none" stroke="#6e6e6e" stroke-width="1.200"/><rect x="7.500" y="6.500" width="4.500" height="4.500" fill="#f2f2f2" stroke="#9b6fc4" stroke-width="1"/></svg>
<div class="vt" style="left:1615px;top:788px;transform:rotate(90deg)">Emulator</div>
<svg class="a" style="left:41px;top:852px" width="11" height="10"><path d="M0 1h1.800M0 5h1.800M0 9h1.800M3.500 1H11M3.500 5H11M3.500 9H11" stroke="#6e6e6e" stroke-width="1.500"/></svg>
<div class="bt" style="left:56.3px;letter-spacing:-0.404px;">TODO</div>
<svg class="a" style="left:109px;top:851px" width="12" height="11"><rect width="12" height="11" rx="1" fill="#6e6e6e"/><path d="M2.500 2.800l2.500 2.200-2.500 2.200M6 8h3.500" fill="none" stroke="#f2f2f2" stroke-width="1.100"/></svg>
<div class="bt" style="left:124.9px;letter-spacing:0.141px;">Terminal</div>
<svg class="a" style="left:194px;top:851px" width="12" height="13"><ellipse cx="6" cy="2.500" rx="5.500" ry="2.300" fill="#6e6e6e"/><path d="M0.500 4.500c1.500 2 9.500 2 11 0v2c-1.500 2-9.500 2-11 0zM0.500 8c1.500 2 9.500 2 11 0v2c-1.500 2-9.500 2-11 0z" fill="#6e6e6e"/></svg>
<div class="bt" style="left:211.5px;letter-spacing:-0.013px;">Database Inspector</div>
<svg class="a" style="left:335px;top:852px" width="8" height="10"><path d="M0 0l8 5-8 5z" fill="#6e6e6e"/></svg>
<div class="bt" style="left:349.6px;letter-spacing:-0.118px;"><u>4</u>: Run</div>
<svg class="a" style="left:403px;top:852px" width="14" height="10"><path d="M2 9.500a5.300 5.300 0 0 1 7.500-7.300" fill="none" stroke="#6e6e6e" stroke-width="1.600"/><path d="M11 4.500a5.300 5.300 0 0 1 1 5" fill="none" stroke="#6e6e6e" stroke-width="1.600"/><path d="M6 9.500l3.500-5" stroke="#6e6e6e" stroke-width="1.600"/></svg>
<div class="bt" style="left:421.3px;letter-spacing:0.158px;">Profiler</div>
<svg class="a" style="left:476px;top:849px" width="16" height="16"><path d="M3 8.300L8.800 3.900" stroke="#6e6e6e" stroke-width="2.200" fill="none"/><path d="M6.200 6.300L13.500 13.400" stroke="#6e6e6e" stroke-width="2.200" fill="none"/></svg>
<div class="bt" style="left:495.5px;letter-spacing:0.044px;">Build</div>
<svg class="a" style="left:543px;top:853px" width="10" height="9"><path d="M0 1h11.500M0 4.500h8M0 8h10" stroke="#6e6e6e" stroke-width="1.500"/></svg>
<div class="bt" style="left:559px;letter-spacing:0.075px;"><u>6</u>: Logcat</div>
<svg class="a" style="left:1388.700px;top:851px" width="14" height="14"><path d="M6.650 0A6.650 6.650 0 1 0 6.650 13.300H13.300V6.650A6.650 6.650 0 0 0 6.650 0z" fill="#f0a61c"/></svg>
<div class="bt" style="left:1392.500px;font-size:10.500px;font-weight:bold;color:#4a3500">6</div>
<div class="bt" style="left:1406px;letter-spacing:0.000px;">Event Log</div>
<svg class="a" style="left:1481px;top:851px" width="13" height="12"><path d="M2.500 8.500H0.500V0.500H9.500V2.500" fill="none" stroke="#7f8b91" stroke-width="1"/><path d="M5.500 9V3.500H12" fill="none" stroke="#7f8b91" stroke-width="1"/><circle cx="8.800" cy="7.300" r="2.100" fill="none" stroke="#7f8b91" stroke-width="1.100"/><path d="M10.300 8.800l2.200 2.200" stroke="#7f8b91" stroke-width="1.300"/></svg>
<div class="bt" style="left:1498.7px;letter-spacing:0.154px;">Layout Inspector</div>
<svg class="a" style="left:14px;top:872px" width="12" height="12"><path d="M0.500 2.500v9h9" fill="none" stroke="#6e6e6e" stroke-width="1"/><rect x="2.500" y="0.500" width="9" height="9" fill="none" stroke="#6e6e6e" stroke-width="1"/></svg>
<div class="t" style="left:35.3px;top:870px;letter-spacing:-0.044px;">Success: Operation succeeded (a minute ago)</div>
<div class="t" style="left:1380.7px;top:870px;letter-spacing:-0.256px;">11:62</div>
<div class="t" style="left:1423.4px;top:870px;letter-spacing:-1.588px;">CRLF</div>
<div class="t" style="left:1463.7px;top:870px;letter-spacing:-0.709px;">UTF-8</div>
<div class="t" style="left:1509px;top:870px;letter-spacing:-0.181px;">4 spaces</div>
<svg class="a" style="left:0;top:0;pointer-events:none" width="1628" height="896"><circle cx="1220.600" cy="42.900" r="12.800" fill="none" stroke="#f8383c" stroke-width="2.800"/><path d="M1120.300 227L1121.300 227.800L1218.300 74L1221.800 75L1223.700 56.500L1208 67.500L1212.500 71.500z" fill="#f8383c"/></svg>
<svg class="a" style="left:1560px;top:850px" width="68" height="46"><circle cx="65.600" cy="95.700" r="69" fill="#fff"/><circle cx="65.600" cy="95.700" r="67.600" fill="#fff" stroke="#a5512a" stroke-width="1.500"/><path d="M68 27.500C60 24 56.500 16 60.500 11.500C66 10.500 70 17 68 27.500z" fill="#90d98a" stroke="#fff" stroke-width="4"/><path d="M68 27.500C60 24 56.500 16 60.500 11.500C66 10.500 70 17 68 27.500z" fill="#90d98a" stroke="#a5512a" stroke-width="1.300"/></svg>
<div class="t" style="left:1514px;top:871px;font-size:14px;line-height:18px;color:rgba(110,110,110,.72);text-shadow:0 0 1px #fff,0 0 1px #fff;letter-spacing:-0.198px;">CSDN @梅洗啦</div>
</body></html>
